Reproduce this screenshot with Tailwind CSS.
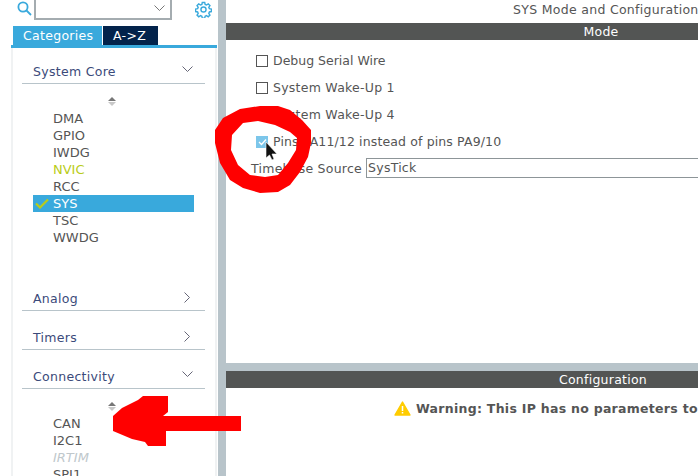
<!DOCTYPE html>
<html lang="en">
<head>
<meta charset="UTF-8">
<title>SYS Mode and Configuration</title>
<script src="https://cdn.jsdelivr.net/npm/@tailwindcss/browser@4"></script>
</head>
<body class="bg-white">
<div class="relative flex h-[476px] w-[698px] overflow-hidden bg-white font-['DejaVu_Sans',sans-serif] text-[13px] text-[#555]">

  <!-- left panel -->
  <div class="flex w-[218px] shrink-0 flex-col">
    <div class="flex h-[26px] shrink-0 items-start">
      <svg class="ml-[17px] mt-[1px] h-[15px] w-[15px]" viewBox="0 0 15 15" fill="none" stroke="#39a9dc" stroke-width="1.8"><circle cx="6" cy="6" r="4.6"/><path d="M9.500 9.500l4.500 4.500"/></svg>
      <div class="relative ml-[2px] mt-[-1px] h-[21px] w-[138px] border-2 border-t-0 border-[#a4acb0]">
        <svg class="absolute right-[5px] top-[6px] h-[6px] w-[11px]" viewBox="0 0 11 6" fill="none" stroke="#777" stroke-width="1"><path d="M.5.5l5 5 5-5"/></svg>
      </div>
      <svg class="ml-[23px] mt-[1px] h-[17px] w-[17px]" viewBox="0 0 24 24" fill="none" stroke="#39a9dc" stroke-width="2"><circle cx="12" cy="12" r="3.600"/><path d="M10.300 2h3.400l.6 2.900 1.900.8 2.500-1.600 2.400 2.400-1.600 2.500.8 1.900 2.900.6v3.400l-2.900.6-.8 1.900 1.600 2.500-2.400 2.400-2.500-1.600-1.900.8-.6 2.900h-3.400l-.6-2.900-1.900-.8-2.500 1.600-2.400-2.400 1.600-2.500-.8-1.900-2.900-.6v-3.400l2.900-.6.8-1.900-1.600-2.500 2.400-2.400 2.500 1.600 1.900-.8z"/></svg>
    </div>
    <div class="ml-[11px] flex h-[22px] w-[206px] shrink-0 items-stretch border-b-[3px] border-[#39a9dc] pl-[2px] text-[12.5px] leading-[19px] tracking-[0.3px] text-white">
      <div class="w-[89px] bg-[#39a9dc] pl-[10px]">Categories</div>
      <div class="ml-[1px] w-[55px] bg-[#03234b] pl-[10px]">A-&gt;Z</div>
    </div>
    <div class="ml-[11px] min-h-0 w-[206px] flex-1 overflow-hidden border-x-2 border-[#f0f2f3] pl-[9px]">
      <div class="flex h-[36px] w-[183px] items-end justify-between border-b border-[#b8c4ca] pb-[2px] pl-[11px] pr-[12px] text-[12.5px] tracking-[0.3px] text-[#3b4a7a]">
        <span class="leading-[18px]">System Core</span>
        <svg class="mb-[9px] h-[6px] w-[11px]" viewBox="0 0 11 6" fill="none" stroke="#667" stroke-width="1"><path d="M.5.5l5 5 5-5"/></svg>
      </div>
      <div class="ml-[86px] mt-[13px] flex w-[8px] flex-col gap-[1px]">
        <div class="h-0 w-0 border-x-[4px] border-b-[4px] border-x-transparent border-b-[#777]"></div>
        <div class="h-0 w-0 border-x-[4px] border-t-[4px] border-x-transparent border-t-[#c8c8c8]"></div>
      </div>
      <div class="ml-[11px] mt-[4px] w-[161px] text-[13px] leading-[17px]">
        <div class="pl-[20px]">DMA</div>
        <div class="pl-[20px]">GPIO</div>
        <div class="pl-[20px]">IWDG</div>
        <div class="pl-[20px] text-[#b9cc1a]">NVIC</div>
        <div class="pl-[20px]">RCC</div>
        <div class="relative bg-[#39a9dc] pl-[20px] text-white">
          <svg class="absolute left-[2px] top-[3px] h-[11px] w-[14px]" viewBox="0 0 14 11" fill="none" stroke="#b9cc1a" stroke-width="2.2"><path d="M1 5.500l4 4 8-8"/></svg>
          SYS
        </div>
        <div class="pl-[20px]">TSC</div>
        <div class="pl-[20px]">WWDG</div>
      </div>
      <div class="mt-[41px] flex h-[24px] w-[183px] items-end justify-between border-b border-[#b8c4ca] pb-[2px] pl-[11px] pr-[15px] text-[12.5px] tracking-[0.3px] text-[#3b4a7a]">
        <span class="leading-[18px]">Analog</span>
        <svg class="mb-[5px] h-[11px] w-[6px]" viewBox="0 0 6 11" fill="none" stroke="#667" stroke-width="1"><path d="M.5.5l5 5-5 5"/></svg>
      </div>
      <div class="mt-[15px] flex h-[24px] w-[183px] items-end justify-between border-b border-[#b8c4ca] pb-[2px] pl-[11px] pr-[15px] text-[12.5px] tracking-[0.3px] text-[#3b4a7a]">
        <span class="leading-[18px]">Timers</span>
        <svg class="mb-[5px] h-[11px] w-[6px]" viewBox="0 0 6 11" fill="none" stroke="#667" stroke-width="1"><path d="M.5.5l5 5-5 5"/></svg>
      </div>
      <div class="mt-[15px] flex h-[24px] w-[183px] items-end justify-between border-b border-[#b8c4ca] pb-[2px] pl-[11px] pr-[12px] text-[12.5px] tracking-[0.3px] text-[#3b4a7a]">
        <span class="leading-[18px]">Connectivity</span>
        <svg class="mb-[9px] h-[6px] w-[11px]" viewBox="0 0 11 6" fill="none" stroke="#667" stroke-width="1"><path d="M.5.5l5 5 5-5"/></svg>
      </div>
      <div class="ml-[86px] mt-[13px] flex w-[8px] flex-col gap-[1px]">
        <div class="h-0 w-0 border-x-[4px] border-b-[4px] border-x-transparent border-b-[#777]"></div>
        <div class="h-0 w-0 border-x-[4px] border-t-[4px] border-x-transparent border-t-[#c8c8c8]"></div>
      </div>
      <div class="ml-[11px] mt-[4px] w-[161px] text-[13px] leading-[17px]">
        <div class="pl-[20px]">CAN</div>
        <div class="pl-[20px]">I2C1</div>
        <div class="pl-[20px] italic text-[#c0c8cc]">IRTIM</div>
        <div class="pl-[20px]">SPI1</div>
      </div>
    </div>
  </div>

  <!-- divider -->
  <div class="w-[8px] shrink-0 bg-[#b8c4ca]"></div>

  <!-- right panel -->
  <div class="flex min-w-0 flex-1 flex-col">
    <div class="h-[23px] whitespace-nowrap pl-[287px] pt-[1px] text-[12.5px] leading-[17px] tracking-[0.3px]">SYS Mode and Configuration</div>
    <div class="h-[17px] overflow-hidden bg-[#535554] text-[12.5px] leading-[17px] tracking-[0.25px] text-white">
      <div class="w-[750px] text-center">Mode</div>
    </div>
    <div class="h-[323px] text-[12.5px] leading-[17px]">
      <div class="mt-[12px] flex h-[17px] items-center pl-[30px]">
        <div class="h-[12px] w-[12px] border border-[#555]"></div>
        <span class="ml-[5px]">Debug Serial Wire</span>
      </div>
      <div class="mt-[10px] flex h-[17px] items-center pl-[30px] tracking-[0.25px]">
        <div class="h-[12px] w-[12px] border border-[#555]"></div>
        <span class="ml-[5px]">System Wake-Up 1</span>
      </div>
      <div class="mt-[10px] flex h-[17px] items-center pl-[30px] tracking-[0.25px]">
        <div class="h-[12px] w-[12px] border border-[#555]"></div>
        <span class="ml-[5px]">System Wake-Up 4</span>
      </div>
      <div class="mt-[10px] flex h-[17px] items-center whitespace-nowrap pl-[30px] tracking-[0.13px]">
        <div class="flex h-[12px] w-[12px] items-center justify-center bg-[#7cc6ea]">
          <svg class="h-[8px] w-[9px]" viewBox="0 0 9 8" fill="none" stroke="#fff" stroke-width="1.300"><path d="M1 4l2.500 2.500L8 1.500"/></svg>
        </div>
        <span class="ml-[5px]">Pins PA11/12 instead of pins PA9/10</span>
      </div>
      <div class="mt-[8px] flex h-[20px] items-center whitespace-nowrap pl-[25px] tracking-[0.25px]">
        <span>Timebase Source</span>
        <div class="ml-[4px] h-[20px] w-[340px] border border-r-0 border-[#8d9598] pl-[1px] leading-[18px]">SysTick</div>
      </div>
    </div>
    <div class="h-[8px] bg-[#b8c4ca]"></div>
    <div class="h-[17px] overflow-hidden bg-[#535554] text-[12.5px] leading-[17px] tracking-[0.25px] text-white">
      <div class="w-[754px] text-center">Configuration</div>
    </div>
    <div class="mt-[12px] flex items-center whitespace-nowrap pl-[168px] text-[12.5px] font-bold leading-[17px] tracking-[0.28px]">
      <svg class="mr-[5px] h-[15px] w-[17px] shrink-0" viewBox="0 0 17 15"><path d="M8.500 1L16 14H1z" fill="#ffcc00" stroke="#ffcc00" stroke-width="1.400" stroke-linejoin="round"/><path d="M8.500 5v5M8.500 11v1.600" stroke="#fff" stroke-width="1.500"/></svg>
      <span>Warning: This IP has no parameters to</span>
    </div>
  </div>

  <!-- red marks drawn over the screenshot -->
  <svg class="pointer-events-none absolute inset-0 h-[476px] w-[698px]" viewBox="0 0 698 476">
    <path d="M260 106L278 106L290 110L302 120L311 130L311 143L308 157L300 172L290 185L278 192L260 193L243 188L230 180L220 163L215 143L215 130L223 118L240 109ZM243 123L232 135L231 150L238 165L250 175L265 177L278 175L288 163L296 150L297 138L290 132L275 125L258 121Z" fill="#f00" fill-rule="evenodd"/>
    <path d="M143 396L168 396L168 412L163 416L241 416L241 431L166 431L166 446L148 446L145 442L132 439L113 431L113 416L122 408L138 400Z" fill="#f00"/>
    <path d="M266 142V158L269.500 155L272 160L274 159L272 154L277 154Z" fill="#111" stroke="#fff" stroke-width="0.6"/>
  </svg>
</div>
</body>
</html>
